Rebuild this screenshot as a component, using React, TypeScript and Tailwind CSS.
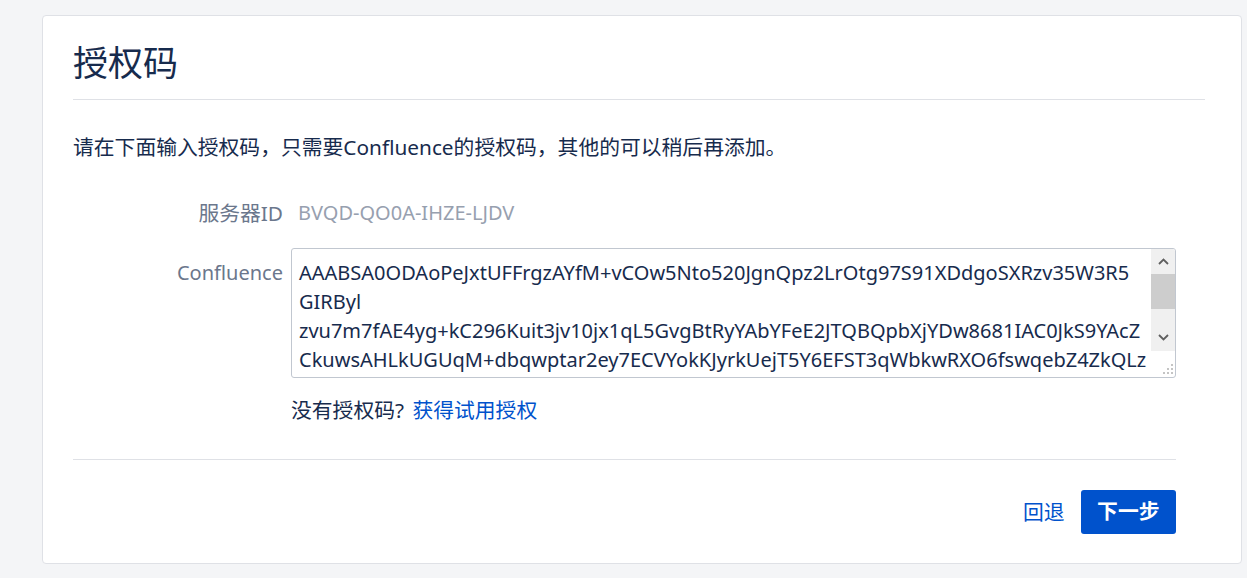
const licenseLines = [
  "AAABSA0ODAoPeJxtUFFrgzAYfM+vCOw5Nto520JgnQpz2LrOtg97S91XDdgoSXRzv35W3R5",
  "GIRByl",
  "zvu7m7fAE4yg+kC296Kuit3jv10jx1qL5GvgBtRyYAbYFeE2JTQBQpbXjYDw8681IAC0JkS9YAcZ",
  "CkuwsAHLkUGUqM+dbqwptar2ey7ECVYokKJyrkUejT5Y6EFST3qWbkwRXO6fswqebZ4ZkQLz",
];

function Chevron({ up }: { up?: boolean }) {
  return (
    <svg width="11" height="7" viewBox="0 0 11 7" className="block">
      <path
        d={up ? "M1 6 L5.5 1.5 L10 6" : "M1 1 L5.5 5.5 L10 1"}
        fill="none"
        stroke="#5f5f5f"
        strokeWidth="1.8"
      />
    </svg>
  );
}

function FakeTextarea() {
  return (
    <div className="flex h-[130px] flex-1 overflow-hidden rounded-[3px] border border-[#c1c7d0] bg-white">
      <div className="flex-1 overflow-hidden pl-[7px] pt-[9px] text-[20px] leading-[29px] text-[#172b4d]">
        {licenseLines.map((l) => (
          <div key={l} className="whitespace-pre">
            {l}
          </div>
        ))}
      </div>
      <div className="flex w-[24px] flex-col">
        <div className="flex h-[102px] flex-col bg-[#f0f0f0]">
          <div className="flex h-[25px] items-center justify-center">
            <Chevron up />
          </div>
          <div className="h-[35px] bg-[#cdcdcd]" />
          <div className="flex-1" />
          <div className="flex h-[27px] items-center justify-center">
            <Chevron />
          </div>
        </div>
        <div className="flex flex-1 items-end justify-end pb-[3px] pr-[2px]">
          <svg width="10" height="10" viewBox="0 0 10 10">
            <rect x="8" y="0" width="2" height="2" fill="#c4c4c4" />
            <rect x="4" y="4" width="2" height="2" fill="#c4c4c4" />
            <rect x="8" y="4" width="2" height="2" fill="#c4c4c4" />
            <rect x="0" y="8" width="2" height="2" fill="#c4c4c4" />
            <rect x="4" y="8" width="2" height="2" fill="#c4c4c4" />
            <rect x="8" y="8" width="2" height="2" fill="#c4c4c4" />
          </svg>
        </div>
      </div>
    </div>
  );
}

export default function App() {
  return (
    <div className="min-h-[578px] bg-[#f4f5f7] pl-[42px] pt-[15px] font-['Noto_Sans','Noto_Sans_CJK_SC',sans-serif] text-[#172b4d] [text-spacing-trim:space-all]">
      <div className="w-[1200px] rounded-[4px] border border-[#dfe1e6] bg-white pb-[29px] pl-[30px] pr-[36px] pt-[26px]">
        <h1 className="border-b border-[#dfe1e6] pb-[15px] text-[35px] font-normal leading-[42px]">
          授权码
        </h1>
        <div className="pr-[29px]">
          <p className="mt-[33px] text-[20.8px] leading-[28px]">
            请在下面输入授权码，只需要Confluence的授权码，其他的可以稍后再添加。
          </p>

          <div className="mt-[38px] flex text-[20.8px] leading-[28px]">
            <div className="w-[218px] pr-[8px] text-right text-[#6b778c]">服务器ID</div>
            <div className="pl-[7px] text-[20px] text-[#97a0af]">BVQD-QO0A-IHZE-LJDV</div>
          </div>

          <div className="mt-[21px] flex">
            <div className="w-[218px] pr-[8px] pt-[10px] text-right text-[20px] leading-[29px] text-[#6b778c]">
              Confluence
            </div>
            <FakeTextarea />
          </div>

          <div className="mt-[18px] pl-[218px] text-[20.8px] leading-[28px]">
            没有授权码?{" "}
            <a href="#" className="ml-[3px] text-[#0052cc]">
              获得试用授权
            </a>
          </div>

          <div className="mt-[35px] border-t border-[#dfe1e6] pt-[30px]">
            <div className="flex items-center justify-end gap-[16px]">
              <a href="#" className="text-[20.8px] leading-[28px] text-[#0052cc]">
                回退
              </a>
              <button className="h-[44px] rounded-[3px] bg-[#0052cc] px-[16.5px] text-[20.8px] font-bold text-white">
                下一步
              </button>
            </div>
          </div>
        </div>
      </div>
    </div>
  );
}
